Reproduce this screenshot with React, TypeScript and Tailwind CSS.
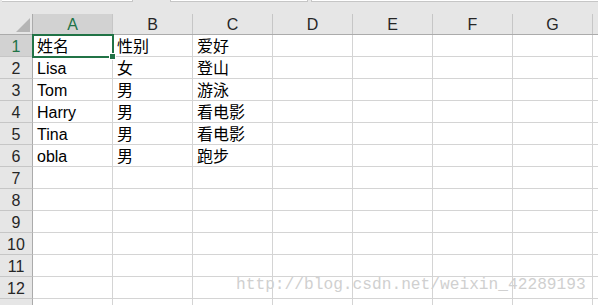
const cols = ["A", "B", "C", "D", "E", "F", "G"];

const data: string[][] = [
  ["姓名", "性别", "爱好"],
  ["Lisa", "女", "登山"],
  ["Tom", "男", "游泳"],
  ["Harry", "男", "看电影"],
  ["Tina", "男", "看电影"],
  ["obla", "男", "跑步"],
];

// row 13 only peeks in at the bottom edge, its number is out of view
const rowCount = 13;

export default function App() {
  return (
    <div className="relative h-[305px] w-[598px] overflow-hidden bg-[#e6e6e6] font-['Liberation_Sans','Noto_Sans_CJK_SC',sans-serif] text-[16px] text-black">
      {/* bottom edge of name box / formula bar */}
      <div className="flex h-[14px] items-start">
        <div className="ml-[2px] h-[2px] w-[131px] border-b border-r border-[#c6c6c6] bg-white" />
        <div className="ml-[37px] h-[2px] w-[138px] border-b border-l border-r border-[#c6c6c6] bg-white" />
        <div className="ml-[3px] h-[2px] flex-1 border-b border-l border-[#c6c6c6] bg-white" />
      </div>

      {/* column headers */}
      <div className="flex h-[21px] border-b border-[#ababab]">
        <div className="relative w-[33px] border-r border-[#ababab]">
          <svg className="absolute bottom-[2px] right-[2px]" width="14" height="14" viewBox="0 0 14 14">
            <polygon points="14,0 14,14 0,14" fill="#b5b5b5" />
          </svg>
        </div>
        {cols.map((c, i) => (
          <div
            key={c}
            className={`flex w-[80px] items-end justify-center border-r border-[#c6c6c6] pb-[1px] leading-[17px] ${
              i === 0 ? "bg-[#d2d2d2] text-[#217346]" : "text-[#262626]"
            }`}
          >
            {c}
          </div>
        ))}
        <div className="flex-1" />
      </div>

      {/* rows */}
      {Array.from({ length: rowCount }, (_, r) => (
        <div key={r} className="flex h-[22px]">
          <div
            className={`flex w-[33px] items-end justify-center border-b border-r border-b-[#c6c6c6] border-r-[#ababab] pb-[1px] leading-[17px] ${
              r === 0 ? "bg-[#d2d2d2] text-[#217346]" : "bg-[#e6e6e6] text-[#262626]"
            }`}
          >
            {r < 12 ? r + 1 : ""}
          </div>
          {cols.map((c, i) => (
            <div
              key={c}
              className="relative flex w-[80px] items-end border-b border-r border-[#d4d4d4] bg-white pb-[1px] pl-[4px] leading-[17px] whitespace-nowrap"
            >
              {data[r]?.[i] ?? ""}
              {r === 0 && i === 0 && (
                <div className="absolute -left-[1px] -top-[1px] z-10 h-[24px] w-[82px] border-2 border-[#217346]">
                  <div className="absolute -bottom-[4px] -right-[4px] h-[7px] w-[7px] border border-white bg-[#217346]" />
                </div>
              )}
            </div>
          ))}
          <div className="flex-1 border-b border-[#d4d4d4] bg-white" />
        </div>
      ))}

      {/* watermark */}
      <div className="pointer-events-none absolute left-[236px] top-[277px] whitespace-nowrap font-['Liberation_Mono',monospace] text-[16.2px] leading-[16px] text-[#d0d0d0]">
        http://blog.csdn.net/weixin_42289193
      </div>
    </div>
  );
}
